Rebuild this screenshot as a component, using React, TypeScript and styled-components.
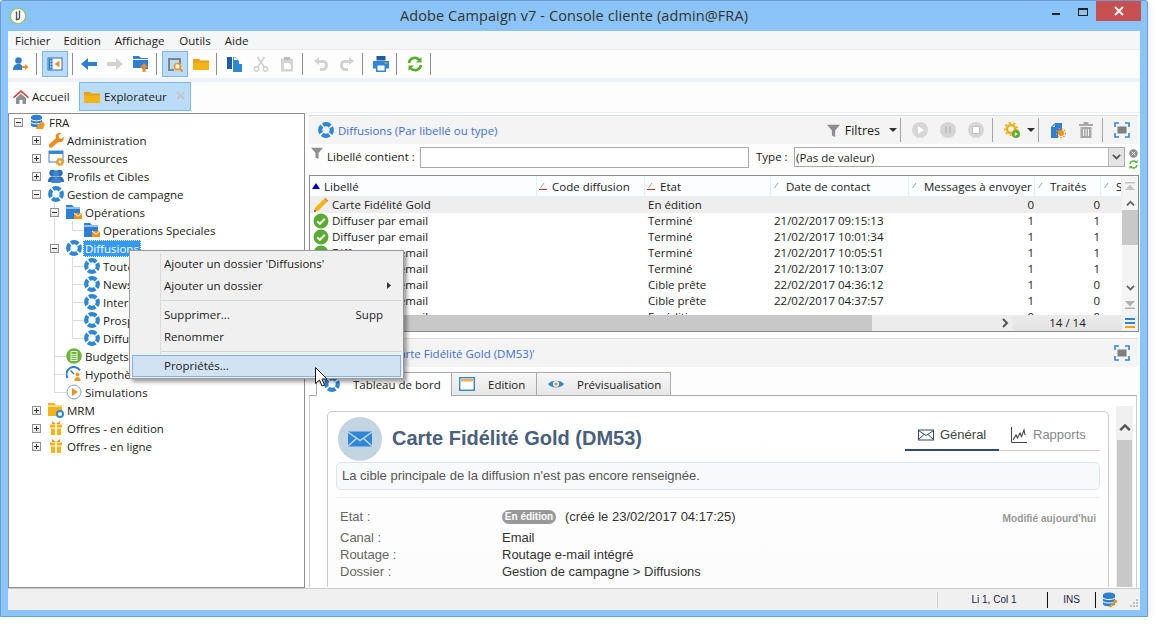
import React from 'react';
import styled, { createGlobalStyle } from 'styled-components';

const UI = '"Open Sans", "Noto Sans", "Liberation Sans", sans-serif';
const WEB = '"Liberation Sans", Arial, sans-serif';

const Global = createGlobalStyle`
  html, body { margin: 0; padding: 0; background: #ffffff; }
  * { box-sizing: border-box; }
  body { font-family: ${UI}; font-size: 11.5px; color: #1b1b1b; }
`;

const Glyph = styled.svg`
  display: block;
  flex-shrink: 0;
`;

type IP = { s?: number };
const I = ({ s = 16, children }: IP & { children: React.ReactNode }) => (
  <Glyph viewBox="0 0 16 16" width={s} height={s}>{children}</Glyph>
);

const Ring = ({ s }: IP) => (
  <I s={s}><circle cx="8" cy="8" r="5.8" fill="none" stroke="#2e86d6" strokeWidth="4.2" strokeDasharray="7.6 1.51" strokeDashoffset="3.8" /></I>
);
const Check = () => (
  <I><circle cx="8" cy="8" r="7.5" fill="#5aab32" /><path d="M4.2 8.4l2.6 2.5 5-5.2" fill="none" stroke="#fff" strokeWidth="2" /></I>
);
const Pencil = () => (
  <I><path d="M1 15l1.2-4.4L11 2l3 3-8.7 8.7z" fill="#f3b416" /><path d="M11 2l1.3-1.2 3 3L14 5z" fill="#e8862a" /><path d="M1 15l.6-2.4 1.8 1.7z" fill="#555" /></I>
);
const Fra = () => (
  <I>
    <path d="M1 3c0-3 11-3 11 0v8c0 3-11 3-11 0z" fill="#2e7fd0" />
    <path d="M1 5.5c2 1.8 9 1.8 11 0M1 8.5c2 1.8 9 1.8 11 0" fill="none" stroke="#fff" strokeWidth="1" />
    <path d="M6 15l2-5h7l-2 5z" fill="#ef9a1f" />
    <path d="M8 10.5l5-3 1.5 2.5" fill="#ef9a1f" />
  </I>
);
const Wrench = () => (
  <I>
    <path d="M1 15l-.2-2.2L8 6 7.6 3.6C8.6 1.4 11 .4 13.4 1L10.6 3.6l.6 2.6 2.6.6L15.6 4.4c.6 2.6-.4 5-2.6 5.8L10.4 10l-7 6z" fill="#f08c1e" />
  </I>
);
const Resources = () => (
  <I>
    <rect x="1" y="1" width="14" height="11" fill="#fff" stroke="#3a86d0" />
    <rect x="1" y="1" width="14" height="3" fill="#3a86d0" />
    <circle cx="12" cy="12" r="2.4" fill="#fff" stroke="#ef9a1f" strokeWidth="2" />
    <circle cx="12" cy="12" r="3.6" fill="none" stroke="#ef9a1f" strokeWidth="1.2" strokeDasharray="1.4 1.4" />
  </I>
);
const People = () => (
  <I>
    <circle cx="4.5" cy="5" r="3.2" fill="#2d6fb8" /><circle cx="11.5" cy="5" r="3.2" fill="#2d6fb8" />
    <path d="M0 14c0-4 2-5.500 4.500-5.500S9 10 9 14zM7 14c0-4 2-5.500 4.500-5.500S16 10 16 14z" fill="#2d6fb8" />
    <circle cx="8" cy="5.500" r="3.200" fill="#3e86d2" />
    <path d="M3.500 15c0-4 2-6 4.500-6s4.500 2 4.500 6z" fill="#3e86d2" />
  </I>
);
const MailFolder = () => (
  <I>
    <path d="M0 1h6l2 2h6v8H8v4H0z" fill="#2e7fd4" />
    <rect x="0" y="3.500" width="14" height="1" fill="#fff" />
    <rect x="8" y="9" width="8" height="6" fill="#f0901e" />
    <path d="M8 9l4 3.200L16 9" fill="none" stroke="#fff" strokeWidth="1" />
  </I>
);
const Calc = () => (
  <I><circle cx="8" cy="8" r="7.800" fill="#6cb33f" /><rect x="4.500" y="3" width="7" height="10" fill="#e6f2dc" /><rect x="5.500" y="4" width="5" height="2" fill="#6cb33f" /><path d="M5.500 7.500h5M5.500 9.500h5M5.500 11.500h5" stroke="#6cb33f" strokeWidth="1" /></I>
);
const Gauge = () => (
  <I>
    <path d="M1.500 12A6.800 6.800 0 0 1 14 4.500" fill="none" stroke="#2e7fd0" strokeWidth="2" />
    <path d="M4.500 4.500L8 8" stroke="#2e7fd0" strokeWidth="1.500" />
    <circle cx="11.500" cy="8.500" r="2" fill="#ef9a1f" />
    <path d="M8.500 15c0-3 1.500-4 3-4s3 1 3 4z" fill="#ef9a1f" />
  </I>
);
const PlayCircle = () => (
  <I><circle cx="8" cy="8" r="7" fill="#fff" stroke="#7ea6cc" /><path d="M6 4l6 4-6 4z" fill="#f0901e" /></I>
);
const MrmFolder = () => (
  <I>
    <path d="M0 1h6l2 2h6v11H0z" fill="#f3b416" />
    <rect x="0" y="3.500" width="14" height="1" fill="#fff" />
    <circle cx="12" cy="12" r="3" fill="#fff" stroke="#2e86d6" strokeWidth="2" />
  </I>
);
const Gift = () => (
  <I>
    <path d="M4 1l4 3 4-3v3H4z" fill="#ef9a1f" />
    <rect x="2" y="4.500" width="12" height="3" fill="#f3b416" />
    <rect x="3" y="8.500" width="10" height="6.500" fill="#f3b416" />
    <rect x="7" y="4.500" width="2" height="10.500" fill="#fff6d8" />
  </I>
);
const YellowFolder = () => (
  <I>
    <path d="M0 3h6l1.500 1.500H16V7H0z" fill="#e8a114" />
    <path d="M0 6.500h16V14H0z" fill="#f3b416" />
  </I>
);
const Home = () => (
  <I>
    <path d="M8 1L0 8l1 1.200L8 3.300l7 5.900L16 8z" fill="#d8453a" />
    <path d="M3 9l5-4.300L13 9v6H9.500v-4h-3v4H3z" fill="#8c8f93" />
  </I>
);
const AddUser = () => (
  <I>
    <circle cx="5.500" cy="4.500" r="3.300" fill="#2e7fd0" />
    <path d="M0 14c0-4 2-6 5.500-6 2 0 3 .7 3.700 1.500V14z" fill="#2e7fd0" />
    <path d="M9 10h3V8l3.500 3-3.500 3v-2H9z" fill="#f0901e" />
  </I>
);
const TreeView = () => (
  <I>
    <rect x="1" y="2" width="14" height="12" fill="#fff" stroke="#2e6fb0" />
    <rect x="1.500" y="2.500" width="4" height="11" fill="#2e7fd0" />
    <path d="M3 5h1.500M3 8h1.500M3 11h1.500" stroke="#fff" strokeWidth="1" />
    <path d="M12.500 4.500v7L7.500 8z" fill="#f0901e" />
  </I>
);
const Arrow = ({ c, flip }: { c: string; flip?: boolean }) => (
  <I><path d={flip ? 'M16 8L9 2v4H0v4h9v4z' : 'M0 8l7-6v4h9v4H7v4z'} fill={c} /></I>
);
const UpFolder = () => (
  <I>
    <path d="M0 0h6l2 2h7v11H9v-1H0z" fill="#2e7fd4" />
    <rect x="0" y="3" width="15" height="1" fill="#fff" />
    <path d="M11 7l4 4.500h-2.500V16h-3v-4.500H7z" fill="#f0901e" />
  </I>
);
const ViewSearch = () => (
  <I>
    <path d="M1 2h13v6h-2V4H3v9h4v2H1z" fill="#7d858c" />
    <circle cx="10.500" cy="10.500" r="3" fill="#fff" stroke="#f0901e" strokeWidth="1.600" />
    <path d="M12.500 12.500l3 3" stroke="#f0901e" strokeWidth="2" />
  </I>
);
const CopyDoc = () => (
  <I>
    <path d="M0 1h5v12H0z" fill="#1f5d9e" />
    <path d="M6 1l2 0 4 4v3h3v8H6z" fill="#2e86d6" />
    <path d="M7 1v3h4z" fill="#fff" />
  </I>
);
const Cut = () => (
  <I>
    <circle cx="3.500" cy="13" r="2.200" fill="none" stroke="#cfcfcf" strokeWidth="1.400" />
    <circle cx="12.500" cy="13" r="2.200" fill="none" stroke="#cfcfcf" strokeWidth="1.400" />
    <path d="M4.500 11.500L11.500 1M11.500 11.500L4.500 1" stroke="#cfcfcf" strokeWidth="1.500" />
  </I>
);
const Paste = () => (
  <I>
    <rect x="2" y="2.500" width="12" height="13" fill="#d4d4d4" />
    <rect x="5" y="1" width="6" height="3" fill="#bdbdbd" />
    <path d="M5 7h5l2 2v4H5z" fill="#fff" />
  </I>
);
const Undo = ({ flip }: { flip?: boolean }) => (
  <I>
    <g transform={flip ? 'matrix(-1 0 0 1 16 0)' : undefined}>
      <path d="M1 5l5-4v3h4c3 0 5 2 5 5s-2 6-5 6H7v-3h3c1.300 0 2-1.300 2-3s-.7-2-2-2H6v2z" fill="#d2d2d2" />
    </g>
  </I>
);
const Printer = () => (
  <I>
    <rect x="3.500" y="0" width="9" height="4.500" fill="#1f5d9e" />
    <rect x="0" y="5" width="16" height="7.500" fill="#2e86d6" />
    <rect x="11.500" y="6.500" width="3" height="1" fill="#f3b416" />
    <rect x="3" y="9.500" width="10" height="6.500" fill="#2e86d6" />
    <rect x="4.500" y="9.500" width="7" height="5" fill="#fff" />
  </I>
);
const Refresh = () => (
  <I>
    <path d="M2 7a6 6 0 0 1 10.500-3" fill="none" stroke="#58ad2c" strokeWidth="2.600" />
    <path d="M14.500 1v5.500H9z" fill="#58ad2c" />
    <path d="M14 9a6 6 0 0 1-10.500 3" fill="none" stroke="#58ad2c" strokeWidth="2.600" />
    <path d="M1.500 15V9.500H7z" fill="#58ad2c" />
  </I>
);
const CloseX = () => (
  <I s={12}><path d="M1 1l10 10M11 1L1 11" stroke="#c6c6c6" strokeWidth="2.400" /></I>
);
const Funnel = ({ s = 16 }: IP) => (
  <I s={s}><path d="M0 1h16l-6 7v8l-4-2V8z" fill="#8e8e8e" /></I>
);
const GrayCircle = ({ kind }: { kind: 'play' | 'pause' | 'stop' }) => (
  <I>
    <circle cx="8" cy="8" r="8" fill="#d6d6d6" />
    {kind === 'play' && <path d="M6 4l6 4-6 4z" fill="#fff" />}
    {kind === 'pause' && <path d="M5 4.500h2v7H5zM9 4.500h2v7H9z" fill="#bfbfbf" />}
    {kind === 'stop' && <rect x="4.500" y="4.500" width="7" height="7" fill="#fff" stroke="#c4c4c4" />}
  </I>
);
const GearPlay = () => (
  <I>
    <circle cx="7" cy="7" r="4" fill="none" stroke="#f0ae14" strokeWidth="2.400" />
    <circle cx="7" cy="7" r="6.200" fill="none" stroke="#f0ae14" strokeWidth="1.800" strokeDasharray="2 2.400" />
    <circle cx="12" cy="12" r="4" fill="#58ad2c" />
    <path d="M10.800 10l3 2-3 2z" fill="#fff" />
  </I>
);
const DocStar = () => (
  <I>
    <path d="M1 5l4-4h7v9H8v6H1z" fill="#2e7fd4" />
    <path d="M2.500 5L5 2.500V5z" fill="#fff" />
    <circle cx="11" cy="11" r="3" fill="#f0901e" />
    <circle cx="11" cy="11" r="4.500" fill="none" stroke="#f0901e" strokeWidth="1.200" strokeDasharray="1.500 1.500" />
  </I>
);
const Trash = () => (
  <I>
    <rect x="1" y="2" width="14" height="2" fill="#a8a8a8" />
    <rect x="5.500" y="0" width="5" height="2" fill="#a8a8a8" />
    <path d="M2.500 5h11v11h-11z" fill="#a8a8a8" />
    <path d="M5.500 7v7M8 7v7M10.500 7v7" stroke="#f4f4f4" strokeWidth="1" />
  </I>
);
const FullScreen = () => (
  <I>
    <path d="M1 5V1h4M11 1h4v4M15 11v4h-4M5 15H1v-4" fill="none" stroke="#2e86d6" strokeWidth="1.600" />
    <rect x="3.500" y="4.500" width="9" height="7" fill="#808080" />
  </I>
);
const Eye = () => (
  <I>
    <path d="M0 8c3-4.500 13-4.500 16 0-3 4.500-13 4.500-16 0z" fill="#2e86d6" />
    <circle cx="8" cy="8" r="3" fill="#fff" />
    <circle cx="8" cy="8" r="1.700" fill="#f0901e" />
  </I>
);
const EditWin = () => (
  <I>
    <rect x="0.700" y="1.700" width="14.600" height="12.600" fill="#fff" stroke="#2e86d6" strokeWidth="1.400" />
    <rect x="2" y="3" width="12" height="2.500" fill="#f0b050" />
  </I>
);
const Envelope = () => (
  <Glyph viewBox="0 0 24 18" width={24} height={18}>
    <path d="M0 1.500h24v15H0z" fill="#2f86d8" />
    <path d="M0 2l12 8.500L24 2M0 16l8.500-7.500M24 16l-8.500-7.500" fill="none" stroke="#c3d5e3" strokeWidth="1.500" />
  </Glyph>
);
const NavyEnvelope = () => (
  <I>
    <rect x="0.500" y="3" width="15" height="10" fill="#fff" stroke="#2f4a6f" />
    <path d="M0.500 3.500L8 8.500l7.500-5M0.500 12.500L6 7.500M15.500 12.500L10 7.500" fill="none" stroke="#2f4a6f" />
  </I>
);
const ChartIcon = () => (
  <I>
    <path d="M.5 0v15.500H16" fill="none" stroke="#444" />
    <path d="M2 13l3-5 1.500 3L9 6l1.500 3.500L13 3l1 5" fill="none" stroke="#444" strokeWidth="1.100" />
  </I>
);
const DbKey = () => (
  <I>
    <path d="M1 3c0-3.500 12-3.500 12 0v9c0 3-12 3-12 0z" fill="#2e7fd0" />
    <path d="M1 6c2 2 10 2 12 0M1 9.500c2 2 10 2 12 0" fill="none" stroke="#fff" />
    <path d="M8 15l5-5" stroke="#ef9a1f" strokeWidth="1.800" />
    <circle cx="13.500" cy="9.500" r="1.800" fill="#ef9a1f" />
  </I>
);
const AppLogo = () => (
  <Glyph viewBox="0 0 16 16" width={16} height={16}>
    <circle cx="8" cy="8" r="7.500" fill="#fff" stroke="#9ac040" />
    <path d="M6.500 3.500v9M9.500 2.500v7c0 1.500-1 2-2.500 2" fill="none" stroke="#4a5a64" strokeWidth="1.400" />
  </Glyph>
);
const ListLines = () => (
  <Glyph viewBox="0 0 10 10" width={10} height={10}>
    <rect y="0" width="10" height="2" fill="#2e86d6" />
    <rect y="4" width="10" height="2" fill="#2e86d6" />
    <rect y="8" width="10" height="2" fill="#f0a020" />
  </Glyph>
);
const Grip = () => (
  <Glyph viewBox="0 0 8 8" width={8} height={8}>
    <path d="M6 0h2v2H6zM3 3h2v2H3zM6 3h2v2H6zM0 6h2v2H0zM3 6h2v2H3zM6 6h2v2H6z" fill="#c2c2c2" />
  </Glyph>
);
const Chevron = ({ up, color = '#666', w = 10 }: { up?: boolean; color?: string; w?: number }) => (
  <Glyph viewBox="0 0 10 7" width={w} height={(w * 7) / 10}>
    <path d={up ? 'M1 6l4-4 4 4' : 'M1 1l4 4 4-4'} fill="none" stroke={color} strokeWidth="2" />
  </Glyph>
);
const SideChevron = () => (
  <Glyph viewBox="0 0 7 10" width={7} height={10}>
    <path d="M1 1l4 4-4 4" fill="none" stroke="#555" strokeWidth="2" />
  </Glyph>
);
const DoubleArrow = ({ up }: { up?: boolean }) => (
  <Glyph viewBox="0 0 10 8" width={10} height={8}>
    {up ? <path d="M0 0h10v1.500H0zM5 2.500L10 8H0z" fill="#c4c4c4" /> : <path d="M0 0h10L5 5.500zM0 6.500h10V8H0z" fill="#b0b0b0" />}
  </Glyph>
);
const SortMark = ({ red }: { red?: boolean }) => (
  <Glyph viewBox="0 0 8 8" width={8} height={8}>
    <path d="M1.500 6L5 1" stroke="#8a8a8a" strokeWidth="0.800" fill="none" />
    {red && <rect x="0" y="7" width="8" height="1" fill="#d22a2a" />}
  </Glyph>
);
const SortUp = () => (
  <Glyph viewBox="0 0 8 7" width={8} height={7}><path d="M4 0l4 6H0z" fill="#0000c8" /></Glyph>
);
const Caret = () => (
  <Glyph viewBox="0 0 8 4" width={8} height={4}><path d="M0 0h8L4 4z" fill="#2f2f2f" /></Glyph>
);
const SideArrow = () => (
  <Glyph viewBox="0 0 4 7" width={4} height={7}><path d="M0 0l4 3.500L0 7z" fill="#333" /></Glyph>
);
const ClearMini = () => (
  <Glyph viewBox="0 0 9 9" width={9} height={9}>
    <circle cx="4.500" cy="4.500" r="4.200" fill="#8c8c8c" />
    <path d="M2.700 2.700l3.600 3.600M6.300 2.700L2.700 6.300" stroke="#fff" strokeWidth="1" />
  </Glyph>
);
const RefreshMini = () => (
  <Glyph viewBox="0 0 9 9" width={9} height={9}>
    <path d="M1 4a3.500 3.500 0 0 1 6-2M8 5a3.500 3.500 0 0 1-6 2" fill="none" stroke="#58ad2c" strokeWidth="1.500" />
    <path d="M8.500 0v3h-3zM.5 9V6h3z" fill="#58ad2c" />
  </Glyph>
);
const MouseCursor = () => (
  <Glyph viewBox="0 0 14 20" width={14} height={20}>
    <path d="M.5.500v16l4-3.500 2.500 6 2.500-1-2.500-6H12z" fill="#fff" stroke="#1a1a1a" strokeWidth="1" />
  </Glyph>
);

/* window frame */
const Win = styled.div`
  position: relative;
  width: 1148px;
  height: 617px;
  background: #8ac4f8;
  border: 1px solid #6c9fd0;
  border-radius: 3px 3px 0 0;
  box-shadow: 1px 1px 6px rgba(0, 0, 0, 0.1);
  display: flex;
  flex-direction: column;
`;
const TitleBar = styled.div`
  height: 30px;
  flex: none;
  display: flex;
  align-items: flex-start;
`;
const AppIconBox = styled.div`
  margin: 7px 0 0 9px;
`;
const TitleText = styled.div`
  flex: 1;
  text-align: center;
  font-size: 14.5px;
  letter-spacing: 0.1px;
  line-height: 30px;
  color: #333;
  padding-left: 70px;
`;
const Controls = styled.div`
  display: flex;
  align-items: flex-start;
  margin-right: 6px;
`;
const Minimize = styled.div`
  width: 8px;
  height: 2px;
  margin-top: 12px;
  background: #222;
`;
const Maximize = styled.div`
  width: 10px;
  height: 8px;
  margin: 7px 0 0 18px;
  border: 1px solid #222;
  border-top-width: 2px;
`;
const CloseBtn = styled.div`
  width: 45px;
  height: 20px;
  margin-left: 8px;
  background: #c75050;
  display: flex;
  align-items: center;
  justify-content: center;
`;
const Body = styled.div`
  flex: 1;
  margin: 0 7px 6px;
  min-height: 0;
  display: flex;
  flex-direction: column;
  background: #f0f0f0;
`;
const MenuBar = styled.div`
  height: 19px;
  flex: none;
  background: #f5f6f7;
  border-bottom: 1px solid #ececec;
  display: flex;
  align-items: center;
`;
const MenuItem = styled.div<{ $x: number }>`
  margin-left: ${p => p.$x}px;
  color: #1b1b1b;
`;
const Toolbar = styled.div`
  height: 28px;
  flex: none;
  background: #fdfdfd;
  display: flex;
  align-items: center;
`;
const ToolButton = styled.div<{ $active?: boolean }>`
  width: 26px;
  height: 26px;
  flex: none;
  display: flex;
  align-items: center;
  justify-content: center;
  background: ${p => (p.$active ? '#bbdcf9' : 'transparent')};
  border: 1px solid ${p => (p.$active ? '#7fb6ea' : 'transparent')};
`;
const ToolSep = styled.div<{ $after?: number; $before?: number }>`
  width: 1px;
  height: 22px;
  flex: none;
  background: #8e8e8e;
  margin: 0 ${p => p.$after ?? 5}px 0 ${p => p.$before ?? 2}px;
`;
const ToolBand = styled.div`
  height: 4px;
  flex: none;
  background: #eef1f8;
`;
const TabStrip = styled.div`
  height: 30px;
  flex: none;
  background: #fdfdfd;
  display: flex;
  align-items: flex-start;
  padding-left: 5px;
`;
const HomeTab = styled.div`
  display: flex;
  align-items: center;
  height: 29px;
  gap: 3px;
  width: 66px;
`;
const OpenTab = styled.div`
  width: 112px;
  height: 29px;
  background: #bbdcf9;
  border: 1px solid #7fb6ea;
  display: flex;
  align-items: center;
  padding-left: 4px;
`;
const OpenTabLabel = styled.span`
  margin-left: 4px;
  width: 72px;
`;

/* main split */
const Split = styled.div`
  flex: 1;
  min-height: 0;
  display: flex;
  background: #fdfdfd;
`;
const TreePanel = styled.div`
  width: 297px;
  flex: none;
  margin-top: 1px;
  background: #fff;
  border: 1px solid #8f8f8f;
  overflow: hidden;
`;
const TreeList = styled.div`
  margin-top: -1px;
`;
const TreeRow = styled.div`
  height: 18px;
  display: flex;
  align-items: center;
`;
const GuideCell = styled.div<{ $v?: 'full' | 'top'; $h?: boolean }>`
  width: 18px;
  height: 18px;
  flex: none;
  position: relative;
  display: flex;
  align-items: center;
  justify-content: center;
  &::before {
    content: '';
    display: ${p => (p.$v ? 'block' : 'none')};
    position: absolute;
    left: 9px;
    top: 0;
    width: 1px;
    height: ${p => (p.$v === 'top' ? '9px' : '18px')};
    background: #dcdcdc;
  }
  &::after {
    content: '';
    display: ${p => (p.$h ? 'block' : 'none')};
    position: absolute;
    left: 9px;
    top: 9px;
    width: 12px;
    height: 1px;
    background: #dcdcdc;
  }
`;
const Expander = styled.div<{ $open: boolean }>`
  width: 9px;
  height: 9px;
  position: relative;
  z-index: 1;
  margin-left: 1px;
  border: 1px solid #8f8f8f;
  background: linear-gradient(#ffffff, #e4e4e4);
  &::before {
    content: '';
    position: absolute;
    left: 1px;
    top: 3px;
    width: 5px;
    height: 1px;
    background: #333;
  }
  &::after {
    content: '';
    display: ${p => (p.$open ? 'none' : 'block')};
    position: absolute;
    left: 3px;
    top: 1px;
    width: 1px;
    height: 5px;
    background: #333;
  }
`;
const TreeIcon = styled.div`
  margin-left: 3px;
  margin-right: 1px;
  position: relative;
  z-index: 1;
`;
const TreeLabel = styled.div<{ $sel?: boolean }>`
  padding: 0 1px;
  line-height: 15px;
  white-space: nowrap;
  border: 1px ${p => (p.$sel ? 'dotted #ffffff' : 'solid transparent')};
  background: ${p => (p.$sel ? '#3399ff' : 'transparent')};
  color: ${p => (p.$sel ? '#fff' : '#1b1b1b')};
`;

const RightCol = styled.div`
  width: 831px;
  margin-left: 4px;
  flex: none;
  display: flex;
  flex-direction: column;
  min-height: 0;
  border-top: 1px solid #e8efff;
  padding-top: 2px;
`;
const PaneHeader = styled.div`
  height: 29px;
  flex: none;
  background: #f4f4f4;
  border-top: 1px solid #dcdcdc;
  display: flex;
  align-items: center;
  margin-right: 2px;
  padding-left: 9px;
`;
const PaneTitle = styled.div`
  margin-left: 4px;
  color: #3f6fd0;
  flex: 1;
  white-space: nowrap;
`;
const PaneFull = styled.div`
  margin-right: 8px;
`;
const HeadTool = styled.div<{ $l?: number }>`
  margin-left: ${p => p.$l ?? 0}px;
  display: flex;
  align-items: center;
`;
const HeadSep = styled.div<{ $l: number }>`
  width: 1px;
  height: 24px;
  background: #a4a4a4;
  margin-left: ${p => p.$l}px;
`;
const FiltresLabel = styled.span`
  margin-left: 5px;
  font-size: 12.5px;
`;
const FilterRow = styled.div`
  height: 31px;
  flex: none;
  display: flex;
  align-items: flex-start;
  padding: 3px 0 0 2px;
`;
const FilterFunnel = styled.div`
  margin: 0 4px 0 0;
`;
const FilterLabel = styled.div<{ $w: number }>`
  width: ${p => p.$w}px;
  height: 21px;
  line-height: 20px;
  flex: none;
  white-space: nowrap;
`;
const TextInput = styled.div`
  width: 329px;
  height: 21px;
  flex: none;
  background: #fff;
  border: 1px solid #aaaaaa;
  margin-right: 7px;
`;
const SelectBox = styled.div`
  width: 331px;
  height: 20px;
  flex: none;
  margin-left: 6px;
  background: #fff;
  border: 1px solid #aaaaaa;
  display: flex;
  align-items: center;
  padding-left: 1px;
`;
const SelectValue = styled.div`
  flex: 1;
`;
const SelectArrow = styled.div`
  width: 16px;
  height: 18px;
  background: #e4e4e4;
  border-left: 1px solid #bbb;
  display: flex;
  align-items: center;
  justify-content: center;
`;
const MiniStack = styled.div`
  display: flex;
  flex-direction: column;
  gap: 2px;
  margin: 2px 0 0 4px;
`;

const TableFrame = styled.div`
  height: 157px;
  width: 830px;
  flex: none;
  border: 1px solid #8a8a8a;
  display: flex;
  flex-direction: column;
  background: #fff;
`;
const TableMain = styled.div`
  height: 139px;
  flex: none;
  display: flex;
`;
const RowsArea = styled.div`
  width: 812px;
  flex: none;
  overflow: hidden;
`;
const COLS = '227px 108px 126px 138px 126px 66px 21px';
const HeadRow = styled.div`
  display: grid;
  grid-template-columns: ${COLS};
  height: 20px;
  background: #fcfdff;
`;
const HeadCell = styled.div`
  display: flex;
  align-items: center;
  padding-left: 2px;
  border-right: 1px solid #e6eef8;
  overflow: hidden;
  white-space: nowrap;
`;
const HeadLabel = styled.span<{ $gap?: number }>`
  margin-left: ${p => p.$gap ?? 5}px;
`;
const DataRow = styled.div<{ $sel?: boolean }>`
  display: grid;
  grid-template-columns: ${COLS};
  grid-template-rows: ${p => (p.$sel ? 17 : 16)}px;
  height: ${p => (p.$sel ? 17 : 16)}px;
  background: ${p => (p.$sel ? '#eeeeee' : '#ffffff')};
  align-items: center;
  line-height: 16px;
`;
const NameCell = styled.div`
  display: flex;
  align-items: center;
  gap: 3px;
  padding-left: 3px;
  height: 16px;
  white-space: nowrap;
`;
const TextCell = styled.div`
  padding-left: 3px;
  white-space: nowrap;
`;
const NumCell = styled.div`
  padding-right: 1px;
  text-align: right;
`;
const VScroll = styled.div`
  width: 16px;
  flex: none;
  background: #f4f4f4;
  display: flex;
  flex-direction: column;
  align-items: stretch;
`;
const VBtn = styled.div<{ $h: number }>`
  height: ${p => p.$h}px;
  flex: none;
  display: flex;
  align-items: center;
  justify-content: center;
`;
const VThumb = styled.div<{ $h: number }>`
  height: ${p => p.$h}px;
  flex: none;
  background: #c8c8c8;
`;
const VGap = styled.div`
  flex: 1;
`;
const HBar = styled.div`
  flex: 1;
  display: flex;
`;
const HTrack = styled.div`
  width: 703px;
  background: #ececec;
  display: flex;
  align-items: center;
`;
const HThumb = styled.div`
  width: 549px;
  height: 100%;
  margin-left: 13px;
  background: #c8c8c8;
`;
const HArrow = styled.div`
  margin-left: 130px;
`;
const Counter = styled.div`
  width: 109px;
  text-align: center;
  line-height: 16px;
  background: linear-gradient(#ececec, #e2e2e2);
`;
const ListBtn = styled.div`
  flex: 1;
  background: #f0f0f0;
  display: flex;
  align-items: center;
  justify-content: center;
`;
const LowerGap = styled.div`
  height: 6px;
  flex: none;
`;
const SubTabs = styled.div`
  height: 28px;
  flex: none;
  display: flex;
  align-items: flex-end;
  padding-left: 7px;
  position: relative;
  z-index: 1;
`;
const SubTab = styled.div<{ $active?: boolean; $w: number; $pad: number }>`
  width: ${p => p.$w}px;
  height: 24px;
  margin-bottom: -1px;
  display: flex;
  align-items: center;
  gap: 13px;
  padding: 0 0 0 ${p => p.$pad}px;
  background: ${p => (p.$active ? '#fff' : 'linear-gradient(#f6f6f6, #e6e6e6)')};
  border: 1px solid #aaaaaa;
  border-bottom: 1px solid ${p => (p.$active ? '#fff' : '#aaaaaa')};
  margin-left: ${p => (p.$active ? 0 : -1)}px;
`;
const TabPanel = styled.div`
  flex: 1;
  min-height: 0;
  width: 828px;
  border: 1px solid #aaaaaa;
  border-color: #aaaaaa #cccccc transparent #cccccc;
  background: #fff;
  display: flex;
  overflow: hidden;
`;
const PanelContent = styled.div`
  flex: 1;
  min-width: 0;
  padding: 15px 7px 0 17px;
`;
const Card = styled.div`
  height: 240px;
  border: 1px solid #cccccc;
  border-radius: 5px;
  background: linear-gradient(#fff, #fbfbfb);
  padding: 5px 8px 0;
  font-family: ${WEB};
`;
const CardHead = styled.div`
  height: 45px;
  display: flex;
  align-items: flex-start;
  padding-left: 2px;
`;
const Avatar = styled.div`
  width: 44px;
  height: 44px;
  flex: none;
  border-radius: 50%;
  background: #c3d5e3;
  display: flex;
  align-items: center;
  justify-content: center;
`;
const CardTitle = styled.div`
  margin-left: 10px;
  font-size: 20px;
  font-weight: 700;
  color: #4a5f7a;
  line-height: 42px;
  white-space: nowrap;
`;
const HeadTabs = styled.div`
  margin-left: auto;
  width: 195px;
  height: 34px;
  border-bottom: 1px solid #cccccc;
  display: flex;
`;
const HeadTab = styled.div<{ $active?: boolean; $w: number; $pad: number }>`
  width: ${p => p.$w}px;
  height: 34px;
  padding: 3px 0 0 ${p => p.$pad}px;
  display: flex;
  align-items: center;
  gap: 6px;
  font-size: 13px;
  color: ${p => (p.$active ? '#444' : '#888')};
  border-bottom: 2px solid ${p => (p.$active ? '#2f4a6f' : 'transparent')};
`;
const Notice = styled.div`
  height: 28px;
  border: 1px solid #dbe6f5;
  border-radius: 5px;
  background: #f8f9fb;
  padding-left: 5px;
  font-size: 13px;
  line-height: 26px;
  color: #555;
`;
const Rule = styled.div`
  height: 1px;
  margin-top: 7px;
  background: #eeeeee;
`;
const DetailGrid = styled.div`
  margin-top: 10px;
  padding: 0 4px;
  display: grid;
  grid-template-columns: 162px 1fr auto;
  grid-template-rows: 21px 17px 17px 17px;
  font-size: 13px;
  line-height: 17px;
  color: #333;
`;
const DetailLabel = styled.div`
  color: #666;
`;
const StateLine = styled.div`
  display: flex;
  align-items: center;
  gap: 9px;
  height: 17px;
`;
const Badge = styled.span`
  width: 54px;
  height: 14px;
  background: #999999;
  border-radius: 7px;
  color: #fff;
  font-size: 10px;
  font-weight: 700;
  line-height: 14px;
  text-align: center;
`;
const Modified = styled.div`
  font-size: 10.2px;
  font-weight: 700;
  color: #999;
  line-height: 21px;
`;
const PanelScroll = styled.div`
  width: 17px;
  flex: none;
  margin: 10px 3px 0 0;
  background: #f0f0f0;
  display: flex;
  flex-direction: column;
`;
const PanelScrollTop = styled.div`
  height: 34px;
  flex: none;
  display: flex;
  align-items: flex-end;
  justify-content: center;
  padding-bottom: 9px;
`;
const PanelThumb = styled.div`
  flex: 1;
  margin: 0 1px;
  background: #c8c8c8;
`;
const StatusBar = styled.div`
  height: 22px;
  flex: none;
  background: #f0f0f0;
  border-top: 1px solid #cccccc;
  display: flex;
  align-items: center;
  justify-content: flex-end;
  font-family: ${WEB};
  font-size: 10px;
  color: #1a1a4a;
`;
const StatusCell = styled.div<{ $w: number; $c: string; $shift?: number }>`
  width: ${p => p.$w}px;
  height: 16px;
  line-height: 16px;
  text-align: center;
  padding-left: ${p => p.$shift ?? 0}px;
  border-left: 1px solid ${p => p.$c};
  display: flex;
  align-items: center;
  justify-content: center;
`;
const StatusEnd = styled.div`
  width: 45px;
  height: 16px;
  border-left: 1px solid #111;
  display: flex;
  align-items: center;
  padding-left: 6px;
  justify-content: space-between;
`;
const GripBox = styled.div`
  margin: 6px 2px 0 0;
`;

/* context menu */
const ContextMenu = styled.div`
  position: absolute;
  left: 128px;
  top: 249px;
  width: 275px;
  height: 129px;
  z-index: 10;
  padding: 2px;
  background: #f0f0f0;
  border: 1px solid #9a9a9a;
  box-shadow: 3px 3px 4px rgba(0, 0, 0, 0.38);
  &::before {
    content: '';
    position: absolute;
    left: 30px;
    top: 2px;
    bottom: 2px;
    width: 1px;
    background: #dcdcdc;
  }
`;
const CtxItem = styled.div<{ $hover?: boolean }>`
  height: 22px;
  position: relative;
  display: flex;
  align-items: center;
  justify-content: space-between;
  padding: 0 17px 2px 31px;
  background: ${p => (p.$hover ? '#d1e2f2' : 'transparent')};
  border: 1px solid ${p => (p.$hover ? '#7eb4ea' : 'transparent')};
`;
const CtxArrow = styled.div`
  margin-right: -8px;
`;
const CtxSep = styled.div`
  height: 1px;
  margin: 3px 0 3px 29px;
  background: #d4d4d4;
`;
const Pointer = styled.div`
  position: absolute;
  left: 314px;
  top: 366px;
  z-index: 11;
`;

const Gap = styled.div<{ $w: number }>`
  width: ${p => p.$w}px;
  flex: none;
`;

type Cell = ' ' | 'v' | 't' | 'c' | '+' | '-' | 't-';
const Guide = ({ k }: { k: Cell }) => {
  const v = k === 'v' || k === 't' || k === 't-' ? 'full' : k === 'c' ? 'top' : undefined;
  const h = k === 't' || k === 'c';
  const open = k === '-' || k === 't-';
  return (
    <GuideCell $v={v} $h={h}>
      {(k === '+' || k === '-' || k === 't-') && <Expander $open={open} />}
    </GuideCell>
  );
};

const treeData: { cells: Cell[]; icon: React.ReactNode; label: string; sel?: boolean }[] = [
  { cells: ['-'], icon: <Fra />, label: 'FRA' },
  { cells: [' ', '+'], icon: <Wrench />, label: 'Administration' },
  { cells: [' ', '+'], icon: <Resources />, label: 'Ressources' },
  { cells: [' ', '+'], icon: <People />, label: 'Profils et Cibles' },
  { cells: [' ', '-'], icon: <Ring />, label: 'Gestion de campagne' },
  { cells: [' ', ' ', 't-'], icon: <MailFolder />, label: 'Opérations' },
  { cells: [' ', ' ', 'v', 'c'], icon: <MailFolder />, label: 'Operations Speciales' },
  { cells: [' ', ' ', 't-'], icon: <Ring />, label: 'Diffusions', sel: true },
  { cells: [' ', ' ', 'v', 't'], icon: <Ring />, label: 'Toutes les diffusions' },
  { cells: [' ', ' ', 'v', 't'], icon: <Ring />, label: 'Newsletters' },
  { cells: [' ', ' ', 'v', 't'], icon: <Ring />, label: 'Internes' },
  { cells: [' ', ' ', 'v', 't'], icon: <Ring />, label: 'Prospects' },
  { cells: [' ', ' ', 'v', 'c'], icon: <Ring />, label: 'Diffusions test' },
  { cells: [' ', ' ', 't'], icon: <Calc />, label: 'Budgets' },
  { cells: [' ', ' ', 't'], icon: <Gauge />, label: 'Hypothèses' },
  { cells: [' ', ' ', 'c'], icon: <PlayCircle />, label: 'Simulations' },
  { cells: [' ', '+'], icon: <MrmFolder />, label: 'MRM' },
  { cells: [' ', '+'], icon: <Gift />, label: 'Offres - en édition' },
  { cells: [' ', '+'], icon: <Gift />, label: 'Offres - en ligne' },
];

const tableRows = [
  { name: 'Carte Fidélité Gold', state: 'En édition', date: '', msg: '0', done: '0', edit: true },
  { name: 'Diffuser par email', state: 'Terminé', date: '21/02/2017 09:15:13', msg: '1', done: '1' },
  { name: 'Diffuser par email', state: 'Terminé', date: '21/02/2017 10:01:34', msg: '1', done: '1' },
  { name: 'Diffuser par email', state: 'Terminé', date: '21/02/2017 10:05:51', msg: '1', done: '1' },
  { name: 'Diffuser par email', state: 'Terminé', date: '21/02/2017 10:13:07', msg: '1', done: '1' },
  { name: 'Diffuser par email', state: 'Cible prête', date: '22/02/2017 04:36:12', msg: '1', done: '0' },
  { name: 'Diffuser par email', state: 'Cible prête', date: '22/02/2017 04:37:57', msg: '1', done: '0' },
  { name: 'Diffuser par email', state: 'En édition', date: '', msg: '0', done: '0' },
];

export default function App() {
  return (
    <>
      <Global />
      <Win>
        <TitleBar>
          <AppIconBox><AppLogo /></AppIconBox>
          <TitleText>Adobe Campaign v7 - Console cliente (admin@FRA)</TitleText>
          <Controls>
            <Minimize />
            <Maximize />
            <CloseBtn>
              <Glyph viewBox="0 0 10 10" width={10} height={10}><path d="M1 1l8 8M9 1L1 9" stroke="#fff" strokeWidth="1.800" /></Glyph>
            </CloseBtn>
          </Controls>
        </TitleBar>
        <Body>
          <MenuBar>
            <MenuItem $x={7}>Fichier</MenuItem>
            <MenuItem $x={13}>Edition</MenuItem>
            <MenuItem $x={14}>Affichage</MenuItem>
            <MenuItem $x={15}>Outils</MenuItem>
            <MenuItem $x={14}>Aide</MenuItem>
          </MenuBar>
          <Toolbar>
            <ToolButton><AddUser /></ToolButton>
            <ToolSep />
            <ToolButton $active><TreeView /></ToolButton>
            <ToolSep $before={4} $after={3} />
            <ToolButton><Arrow c="#2e7fd0" /></ToolButton>
            <ToolButton><Arrow c="#d2d2d2" flip /></ToolButton>
            <ToolButton><UpFolder /></ToolButton>
            <ToolSep />
            <ToolButton $active><ViewSearch /></ToolButton>
            <ToolButton><YellowFolder /></ToolButton>
            <ToolSep />
            <ToolButton><CopyDoc /></ToolButton>
            <ToolButton><Cut /></ToolButton>
            <ToolButton><Paste /></ToolButton>
            <ToolSep />
            <ToolButton><Undo /></ToolButton>
            <ToolButton><Undo flip /></ToolButton>
            <ToolSep />
            <ToolButton><Printer /></ToolButton>
            <ToolSep />
            <ToolButton><Refresh /></ToolButton>
            <ToolSep />
          </Toolbar>
          <ToolBand />
          <TabStrip>
            <HomeTab><Home />Accueil</HomeTab>
            <OpenTab>
              <YellowFolder />
              <OpenTabLabel>Explorateur</OpenTabLabel>
              <CloseX />
            </OpenTab>
          </TabStrip>
          <Split>
            <TreePanel>
              <TreeList>
                {treeData.map(r => (
                  <TreeRow key={r.label}>
                    {r.cells.map((k, i) => <Guide key={i} k={k} />)}
                    <TreeIcon>{r.icon}</TreeIcon>
                    <TreeLabel $sel={r.sel}>{r.label}</TreeLabel>
                  </TreeRow>
                ))}
              </TreeList>
            </TreePanel>
            <RightCol>
              <PaneHeader>
                <Ring />
                <PaneTitle>Diffusions (Par libellé ou type)</PaneTitle>
                <HeadTool><Funnel s={13} /><FiltresLabel>Filtres</FiltresLabel></HeadTool>
                <HeadTool $l={9}><Caret /></HeadTool>
                <HeadSep $l={3} />
                <HeadTool $l={11}><GrayCircle kind="play" /></HeadTool>
                <HeadTool $l={12}><GrayCircle kind="pause" /></HeadTool>
                <HeadTool $l={12}><GrayCircle kind="stop" /></HeadTool>
                <HeadSep $l={8} />
                <HeadTool $l={11}><GearPlay /></HeadTool>
                <HeadTool $l={7}><Caret /></HeadTool>
                <HeadSep $l={3} />
                <HeadTool $l={11}><DocStar /></HeadTool>
                <HeadTool $l={12}><Trash /></HeadTool>
                <HeadSep $l={8} />
                <HeadTool $l={11}><FullScreen /></HeadTool>
                <Gap $w={8} />
              </PaneHeader>
              <FilterRow>
                <FilterFunnel><Funnel s={12} /></FilterFunnel>
                <FilterLabel $w={93}>Libellé contient :</FilterLabel>
                <TextInput />
                <FilterLabel $w={32}>Type :</FilterLabel>
                <SelectBox>
                  <SelectValue>(Pas de valeur)</SelectValue>
                  <SelectArrow><Chevron color="#555" w={9} /></SelectArrow>
                </SelectBox>
                <MiniStack><ClearMini /><RefreshMini /></MiniStack>
              </FilterRow>
              <TableFrame>
                <TableMain>
                  <RowsArea>
                    <HeadRow>
                      <HeadCell><SortUp /><HeadLabel $gap={4}>Libellé</HeadLabel></HeadCell>
                      <HeadCell><SortMark red /><HeadLabel>Code diffusion</HeadLabel></HeadCell>
                      <HeadCell><SortMark red /><HeadLabel>Etat</HeadLabel></HeadCell>
                      <HeadCell><SortMark /><HeadLabel>Date de contact</HeadLabel></HeadCell>
                      <HeadCell><SortMark /><HeadLabel>Messages à envoyer</HeadLabel></HeadCell>
                      <HeadCell><SortMark /><HeadLabel>Traités</HeadLabel></HeadCell>
                      <HeadCell><SortMark /><HeadLabel>Statut</HeadLabel></HeadCell>
                    </HeadRow>
                    {tableRows.map((r, i) => (
                      <DataRow key={i} $sel={r.edit}>
                        <NameCell>{r.edit ? <Pencil /> : <Check />}{r.name}</NameCell>
                        <div />
                        <TextCell>{r.state}</TextCell>
                        <TextCell>{r.date}</TextCell>
                        <NumCell>{r.msg}</NumCell>
                        <NumCell>{r.done}</NumCell>
                        <div />
                      </DataRow>
                    ))}
                  </RowsArea>
                  <VScroll>
                    <VBtn $h={20}><DoubleArrow up /></VBtn>
                    <VBtn $h={14}><Chevron up color="#666" w={9} /></VBtn>
                    <VThumb $h={35} />
                    <VGap />
                    <VBtn $h={14}><Chevron color="#666" w={9} /></VBtn>
                    <VBtn $h={20}><DoubleArrow /></VBtn>
                  </VScroll>
                </TableMain>
                <HBar>
                  <HTrack>
                    <HThumb />
                    <HArrow><SideChevron /></HArrow>
                  </HTrack>
                  <Counter>14 / 14</Counter>
                  <ListBtn><ListLines /></ListBtn>
                </HBar>
              </TableFrame>
              <LowerGap />
              <PaneHeader>
                <Ring />
                <PaneTitle>Diffusion 'Carte Fidélité Gold (DM53)'</PaneTitle>
                <PaneFull><FullScreen /></PaneFull>
              </PaneHeader>
              <SubTabs>
                <SubTab $active $w={136} $pad={7}><Ring />Tableau de bord</SubTab>
                <SubTab $w={86} $pad={7}><EditWin />Edition</SubTab>
                <SubTab $w={135} $pad={11}><Eye />Prévisualisation</SubTab>
              </SubTabs>
              <TabPanel>
                <PanelContent>
                  <Card>
                    <CardHead>
                      <Avatar><Envelope /></Avatar>
                      <CardTitle>Carte Fidélité Gold (DM53)</CardTitle>
                      <HeadTabs>
                        <HeadTab $active $w={94} $pad={13}><NavyEnvelope />Général</HeadTab>
                        <HeadTab $w={101} $pad={12}><ChartIcon />Rapports</HeadTab>
                      </HeadTabs>
                    </CardHead>
                    <Notice>La cible principale de la diffusion n'est pas encore renseignée.</Notice>
                    <Rule />
                    <DetailGrid>
                      <DetailLabel>Etat :</DetailLabel>
                      <StateLine><Badge>En édition</Badge>(créé le 23/02/2017 04:17:25)</StateLine>
                      <Modified>Modifié aujourd'hui</Modified>
                      <DetailLabel>Canal :</DetailLabel><div>Email</div><div />
                      <DetailLabel>Routage :</DetailLabel><div>Routage e-mail intégré</div><div />
                      <DetailLabel>Dossier :</DetailLabel><div>Gestion de campagne &gt; Diffusions</div><div />
                    </DetailGrid>
                  </Card>
                </PanelContent>
                <PanelScroll>
                  <PanelScrollTop><Chevron up color="#555" w={12} /></PanelScrollTop>
                  <PanelThumb />
                </PanelScroll>
              </TabPanel>
            </RightCol>
          </Split>
          <StatusBar>
            <StatusCell $w={110} $c="#d4d4d4" $shift={3}>Li 1, Col 1</StatusCell>
            <StatusCell $w={48} $c="#111">INS</StatusCell>
            <StatusEnd>
              <DbKey />
              <GripBox><Grip /></GripBox>
            </StatusEnd>
          </StatusBar>
        </Body>
        <ContextMenu>
          <CtxItem>Ajouter un dossier 'Diffusions'</CtxItem>
          <CtxItem>Ajouter un dossier<CtxArrow><SideArrow /></CtxArrow></CtxItem>
          <CtxSep />
          <CtxItem>Supprimer...<span>Supp</span></CtxItem>
          <CtxItem>Renommer</CtxItem>
          <CtxSep />
          <CtxItem $hover>Propriétés...</CtxItem>
        </ContextMenu>
        <Pointer><MouseCursor /></Pointer>
      </Win>
    </>
  );
}
